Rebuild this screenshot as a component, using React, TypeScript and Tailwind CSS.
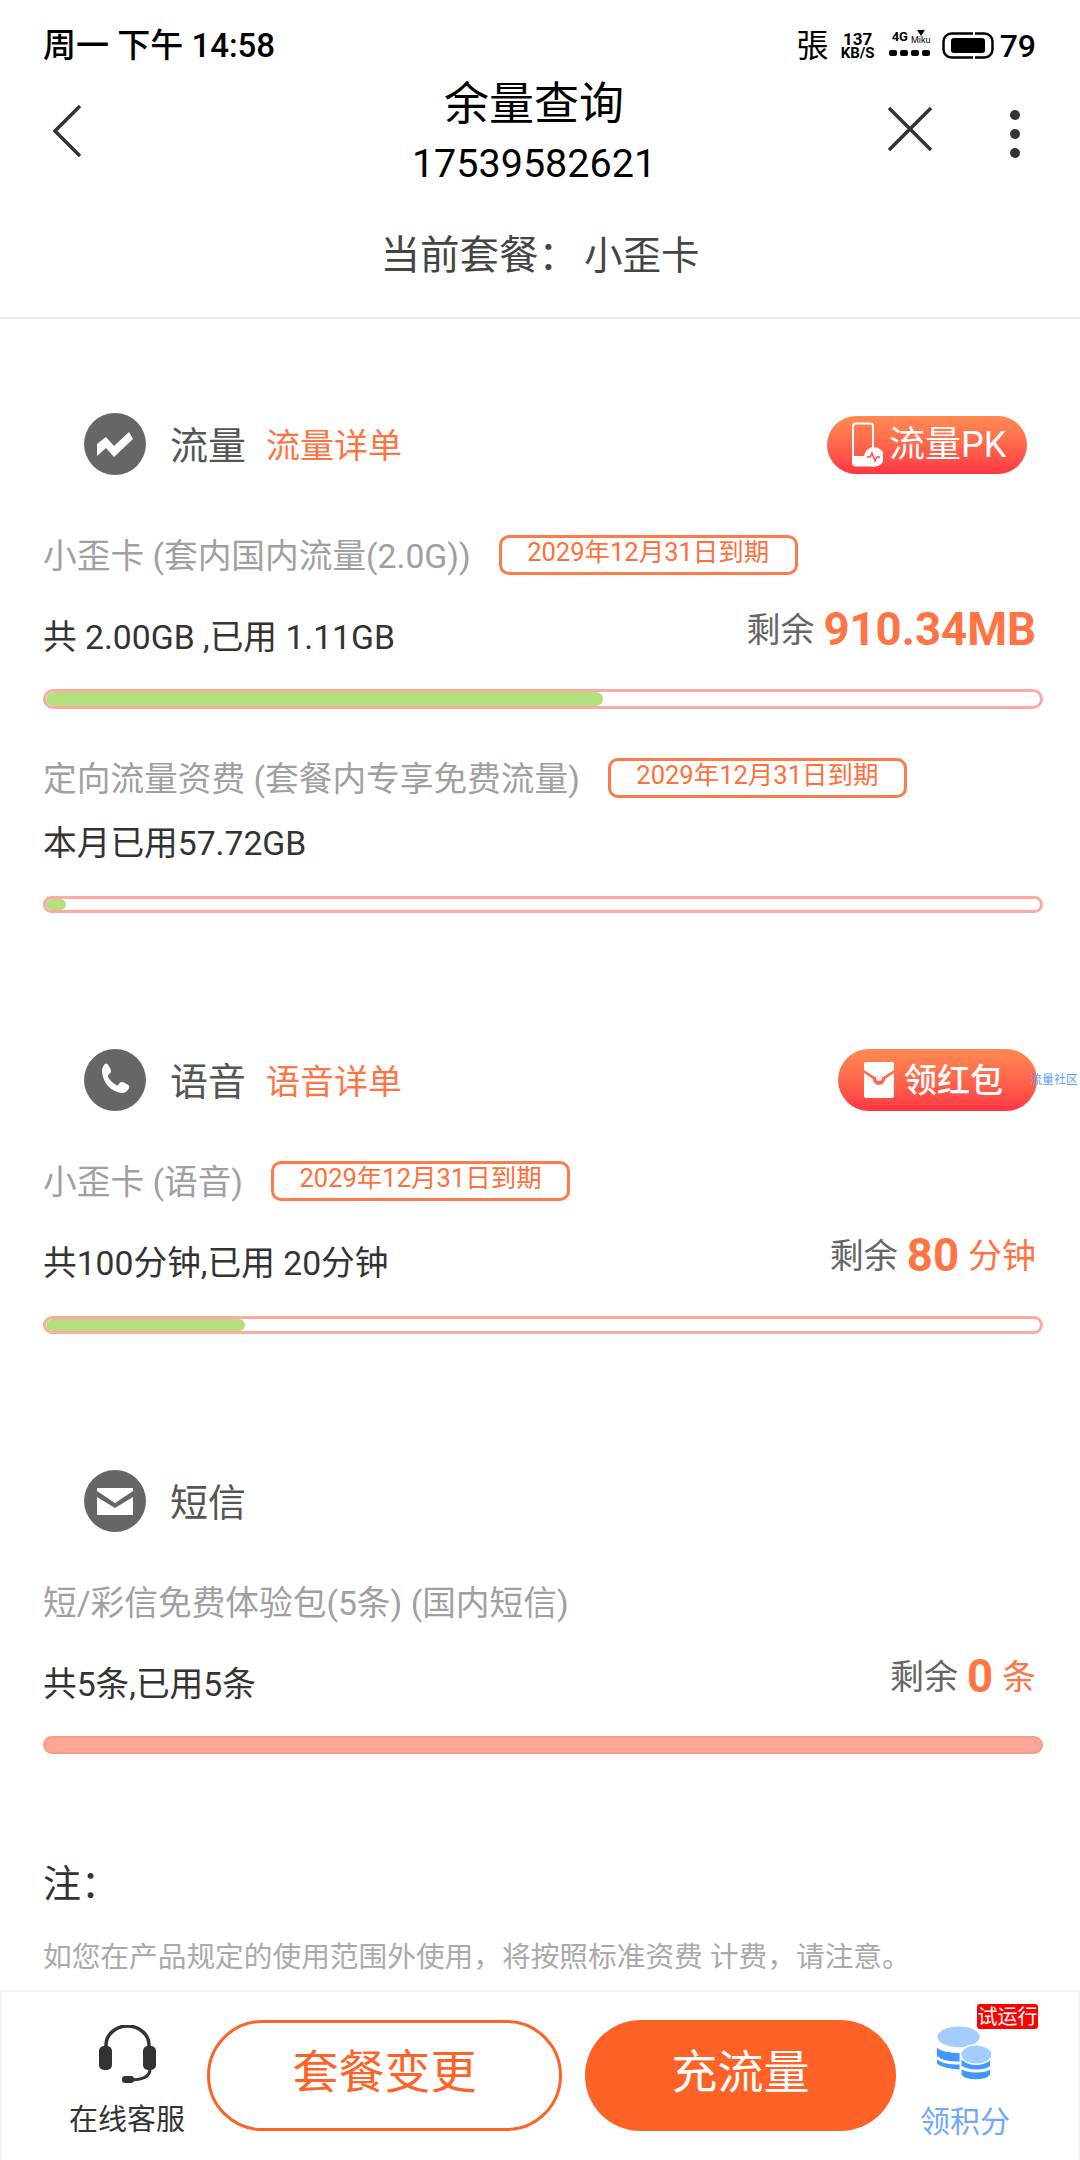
import type { ReactNode } from "react";

const FONT = "font-['Roboto','Noto_Sans_CJK_SC',sans-serif]";

function ExpiryBadge() {
    return (
        <span className="ml-[28px] flex h-[40px] w-[299px] items-center justify-center rounded-[10px] border-[3px] border-[#ff7a4a] pb-[5px] text-[25.500px] leading-none text-[#ff6f3c]">
            2029年12月31日到期
        </span>
    );
}

function PlanRow({ name, expiry = true }: { name: string; expiry?: boolean }) {
    return (
        <div className="flex h-[44px] items-center pl-[43px]">
            <span className="whitespace-nowrap pt-[3px] text-[33.700px] leading-none text-[#a0a0a0]">{name}</span>
            {expiry && <ExpiryBadge />}
        </div>
    );
}

function Remaining({ value, unit }: { value: string; unit?: string }) {
    return (
        <div className="flex h-[48px] items-center gap-[9px] pt-[2px]">
            <span className="text-[34px] text-[#666]">剩余</span>
            <span className="text-[45.500px] font-bold text-[#ff7443]">{value}</span>
            {unit && <span className="text-[34px] text-[#ff7443]">{unit}</span>}
        </div>
    );
}

function Usage({ text, children }: { text: string; children: ReactNode }) {
    return (
        <div className="flex h-[56px] items-start justify-between pl-[43px] pr-[44px]">
            <span className="mt-[10px] whitespace-nowrap text-[33.700px] leading-[46px] text-[#333]">{text}</span>
            {children}
        </div>
    );
}

function Bar({ used, className }: { used: number; className: string }) {
    return (
        <div className={`mx-[43px] w-[1000px] overflow-hidden rounded-full border-[3px] border-[#ffaaa0] bg-white ${className}`}>
            <div className="h-full rounded-full bg-[#b3e07f]" style={{ width: `${used}%` }} />
        </div>
    );
}

function SectionHead({ icon, title, link, children }: { icon: ReactNode; title: string; link?: string; children?: ReactNode }) {
    return (
        <div className="flex h-[62px] items-center pl-[84px]">
            <div className="flex h-[62px] w-[62px] items-center justify-center rounded-full bg-[#666]">{icon}</div>
            <span className="ml-[24px] pt-[4px] text-[38px] leading-none text-[#555]">{title}</span>
            {link && <span className="ml-[20px] pt-[4px] text-[34px] leading-none text-[#ff7443]">{link}</span>}
            {children}
        </div>
    );
}

function StatusBar() {
    return (
        <div className="flex h-[82px] items-start justify-between pl-[43px] pr-[44px] pt-[28px] text-black">
            <span className="text-[33px] font-medium leading-[36px]">周一 下午 14:58</span>
            <div className="flex items-start">
                <span className="text-[32px] leading-[36px]">張</span>
                <div className="ml-[10px] mt-[4px] flex w-[38px] flex-col items-center font-bold">
                    <span className="text-[17px] leading-[15px]">137</span>
                    <span className="text-[15px] leading-[12px]">KB/S</span>
                </div>
                <div className="ml-[12px] mt-[2px] w-[44px]">
                    <div className="flex h-[18px] items-start text-[13px] font-bold leading-[14px]">
                        <span className="ml-[3px]">4G</span>
                        <div className="ml-[3px] flex flex-col items-center">
                            <svg width="8" height="6" viewBox="0 0 8 6"><path d="M0 0h8L4 6z" fill="#000" /></svg>
                            <span className="text-[9px] font-normal leading-[9px]">Miku</span>
                        </div>
                    </div>
                    <div className="mt-[2px] flex gap-[3px]">
                        <i className="h-[6px] w-[8px] rounded-[2px] bg-black" />
                        <i className="h-[6px] w-[8px] rounded-[2px] bg-black" />
                        <i className="h-[6px] w-[8px] rounded-[2px] bg-black" />
                        <i className="h-[6px] w-[8px] rounded-[2px] bg-black" />
                    </div>
                </div>
                <svg className="ml-[9px] mt-[4px]" width="52" height="27" viewBox="0 0 52 27">
                    <rect x="1.5" y="1.5" width="49" height="24" rx="8" fill="none" stroke="#000" strokeWidth="2.5" />
                    <rect x="9" y="6" width="34" height="15" rx="3" fill="#000" />
                    <path d="M32 0v3M32 24v3" stroke="#fff" strokeWidth="2" />
                </svg>
                <span className="ml-[6px] text-[32px] font-medium leading-[36px]">79</span>
            </div>
        </div>
    );
}

function NavBar() {
    return (
        <div className="grid h-[102px] grid-cols-[1fr_auto_1fr]">
            <div className="pl-[52px] pt-[22px]">
                <svg width="30" height="54" viewBox="0 0 30 54" fill="none" stroke="#333" strokeWidth="3.5">
                    <path d="M28 2 3 27l25 25" />
                </svg>
            </div>
            <div className="mr-[12px] flex flex-col items-center">
                <span className="text-[45px] leading-[46px] text-black">余量查询</span>
                <span className="mt-[15px] text-[39.500px] leading-[42px] text-black">17539582621</span>
            </div>
            <div className="flex items-start justify-end pr-[60px] pt-[24px]">
                <svg width="46" height="46" viewBox="0 0 46 46" stroke="#333" strokeWidth="3.5">
                    <path d="M2 2l42 42M44 2 2 44" />
                </svg>
                <div className="ml-[77px] flex flex-col gap-[9px] pt-[4px]">
                    <i className="h-[10px] w-[10px] rounded-full bg-[#333]" />
                    <i className="h-[10px] w-[10px] rounded-full bg-[#333]" />
                    <i className="h-[10px] w-[10px] rounded-full bg-[#333]" />
                </div>
            </div>
        </div>
    );
}

export default function App() {
    return (
        <div className={`flex h-[2160px] w-[1080px] flex-col overflow-hidden bg-white ${FONT}`}>
            <StatusBar />
            <NavBar />
            <div className="flex h-[135px] justify-center border-b-2 border-[#eee] pt-[49px] text-[39.500px] leading-[46px] text-[#444]">
                当前套餐：<span className="ml-[6px] text-[38.500px]">小歪卡</span>
            </div>

            <div className="min-h-0 flex-1 overflow-hidden">
                {/* 流量 */}
                <div className="mt-[94px]">
                    <SectionHead
                        title="流量"
                        link="流量详单"
                        icon={
                            <svg width="36" height="26" viewBox="0 0 36 26" fill="#fff">
                                <path d="M0 13 9 6l8 9L32 1l4 7-19 18-8-9-9 8z" />
                            </svg>
                        }
                    >
                        <div className="ml-auto mr-[53px] mt-[2px] flex h-[58px] w-[200px] items-center rounded-full bg-gradient-to-b from-[#ff8a52] to-[#ff3344] pl-[24px] text-white">
                            <svg width="32" height="46" viewBox="0 0 32 46" fill="none">
                                <rect x="2" y="1.5" width="20" height="42" rx="3" stroke="#fff" strokeWidth="2" />
                                <rect x="2" y="34" width="20" height="9" fill="#fff" />
                                <circle cx="23" cy="35" r="10" fill="#fff" />
                                <path d="M16 35h3l2-4 3 8 2-4h3" stroke="#ff4a44" strokeWidth="1.5" />
                            </svg>
                            <span className="ml-[6px] whitespace-nowrap text-[36px] leading-none">流量PK</span>
                        </div>
                    </SectionHead>
                    <div className="mt-[58px]">
                        <PlanRow name="小歪卡 (套内国内流量(2.0G))" />
                    </div>
                    <div className="mt-[28px]">
                        <Usage text="共 2.00GB ,已用 1.11GB">
                            <Remaining value="910.34MB" />
                        </Usage>
                    </div>
                    <Bar used={56} className="mt-[28px] h-[20px]" />
                    <div className="mt-[47px]">
                        <PlanRow name="定向流量资费 (套餐内专享免费流量)" />
                    </div>
                    <div className="mt-[21px] flex h-[44px] items-center pl-[43px] pt-[2px] text-[33.700px] text-[#333]">本月已用57.72GB</div>
                    <Bar used={2} className="mt-[31px] h-[17px]" />
                </div>

                {/* 语音 */}
                <div className="mt-[136px]">
                    <SectionHead
                        title="语音"
                        link="语音详单"
                        icon={
                            <svg width="46" height="46" viewBox="0 0 24 24" fill="#fff">
                                <path d="M6.6 3.800c.8-.5 1.600-.2 2 .6l1.200 2.300c.3.7.2 1.400-.4 1.800L8.500 9.300c-.3.3-.3.6-.2.9.9 2 2.500 3.600 4.500 4.500.3.100.6.100.9-.2l.8-.9c.4-.6 1.100-.7 1.800-.4l2.300 1.200c.8.4 1.100 1.200.6 2-.9 1.700-2.400 2.600-4 2.400C9.800 17.900 6 14 5.200 8c-.2-1.700.5-3.200 1.400-4.200z" />
                            </svg>
                        }
                    >
                        <div className="relative ml-auto mr-[43px] flex h-[62px] w-[199px] items-center rounded-full bg-gradient-to-b from-[#ff8a52] to-[#ff3344] pl-[25px] text-white">
                            <span className="absolute left-[192px] top-[23px] whitespace-nowrap text-[12px] leading-[16px] text-[#5aa2f0]">流量社区</span>
                            <svg width="32" height="36" viewBox="0 0 32 36" fill="#fff">
                                <path d="M1 2a2 2 0 0 1 2-2h26a2 2 0 0 1 2 2v6L20 15a5 5 0 0 0-8 0L1 8zM1 11l9 6a6 6 0 0 0 12 0l9-6v23a2 2 0 0 1-2 2H3a2 2 0 0 1-2-2z" />
                                <circle cx="16" cy="16" r="3" />
                            </svg>
                            <span className="ml-[9px] text-[33px] font-medium leading-none">领红包</span>
                        </div>
                    </SectionHead>
                    <div className="mt-[48px]">
                        <PlanRow name="小歪卡 (语音)" />
                    </div>
                    <div className="mt-[28px]">
                        <Usage text="共100分钟,已用 20分钟">
                            <Remaining value="80" unit="分钟" />
                        </Usage>
                    </div>
                    <Bar used={20} className="mt-[29px] h-[18px]" />
                </div>

                {/* 短信 */}
                <div className="mt-[136px]">
                    <SectionHead
                        title="短信"
                        icon={
                            <svg width="36" height="27" viewBox="0 0 36 27" fill="#fff">
                                <path d="M0 0h36v3L18 15 0 3zM0 9l18 11L36 9v18H0z" />
                            </svg>
                        }
                    />
                    <div className="mt-[48px]">
                        <PlanRow name="短/彩信免费体验包(5条) (国内短信)" expiry={false} />
                    </div>
                    <div className="mt-[28px]">
                        <Usage text="共5条,已用5条">
                            <Remaining value="0" unit="条" />
                        </Usage>
                    </div>
                    <div className="mx-[43px] mt-[28px] h-[18px] w-[1000px] rounded-full border-2 border-[#f59a8c] bg-[#ffa598]" />
                </div>

                <div className="mt-[108px] pl-[43px] text-[38px] leading-[44px] text-[#333]">注：</div>
                <div className="mt-[33px] whitespace-nowrap pl-[43px] text-[28.700px] leading-[36px] text-[#aaa]">
                    如您在产品规定的使用范围外使用，将按照标准资费 计费，请注意。
                </div>
            </div>

            {/* Bottom actions */}
            <div className="flex h-[170px] shrink-0 border-x-2 border-t-2 border-[#f4f4f4] bg-white pt-[28px]">
                <div className="flex w-[205px] flex-col items-center pl-[45px]">
                    <svg className="mt-[5px]" width="57" height="59" viewBox="0 0 57 59" fill="none">
                        <path d="M7 22v-2a21.500 19 0 0 1 43 0v2" stroke="#333" strokeWidth="3.5" />
                        <rect x="0" y="21" width="13" height="24" rx="5" fill="#333" />
                        <rect x="44" y="21" width="13" height="24" rx="5" fill="#333" />
                        <path d="M51 44c0 8-9 11-21 11" stroke="#333" strokeWidth="3" />
                        <rect x="23" y="51" width="12" height="7" rx="3" fill="#333" />
                    </svg>
                    <span className="mt-[19px] whitespace-nowrap text-[29px] leading-[34px] text-[#333]">在线客服</span>
                </div>
                <button className="flex h-[111px] w-[355px] items-center justify-center rounded-full border-[3px] border-[#ff6226] pb-[6px] text-[46px] text-[#ff6226]">
                    套餐变更
                </button>
                <button className="ml-[23px] flex h-[111px] w-[311px] items-center justify-center rounded-full bg-[#ff6226] pb-[6px] text-[46px] text-white">
                    充流量
                </button>
                <div className="relative flex w-[138px] flex-col items-center">
                    <span className="absolute left-[81px] top-[-16px] flex h-[25px] w-[61px] items-center justify-center rounded-[3px] bg-[#ff0000] text-[20px] leading-none text-white">试运行</span>
                    <svg className="mr-[2px] mt-[6px]" width="55" height="55" viewBox="0 0 56 56">
                        <path d="M0 22c5 7 35 7 42 3v17c-8 4-36 3-42-4z" fill="#3f97ff" />
                        <path d="M0 32c6 7 30 7 42 3" stroke="#fff" strokeWidth="3" fill="none" />
                        <ellipse cx="22" cy="11" rx="22" ry="11" fill="#a3ccff" stroke="#fff" strokeWidth="1" />
                        <path d="M24 30c6 5 25 5 31 0v20c-5 7-26 7-31 0z" fill="#3f97ff" stroke="#fff" strokeWidth="2" />
                        <path d="M25 42c6 5 24 5 30 0" stroke="#fff" strokeWidth="3" fill="none" />
                        <ellipse cx="40" cy="29" rx="16" ry="10" fill="#a3ccff" stroke="#fff" strokeWidth="1.500" />
                    </svg>
                    <span className="mt-[23px] whitespace-nowrap text-[30px] leading-[36px] text-[#6ea7ff]">领积分</span>
                </div>
            </div>
        </div>
    );
}
